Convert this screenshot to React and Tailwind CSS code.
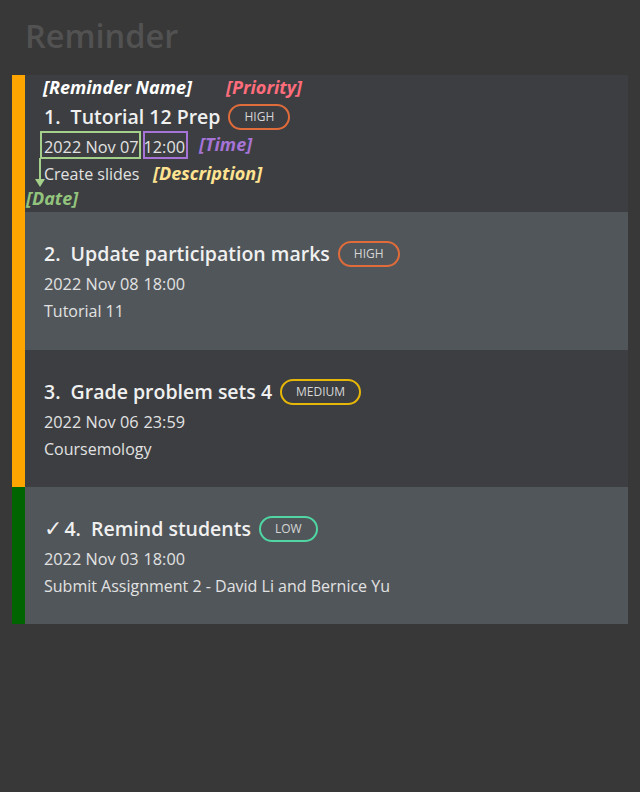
import React from 'react';

const reminders = [
  { no: 1, name: 'Tutorial 12 Prep', priority: 'HIGH', date: '2022 Nov 07', time: '12:00', desc: 'Create slides', done: false },
  { no: 2, name: 'Update participation marks', priority: 'HIGH', date: '2022 Nov 08', time: '18:00', desc: 'Tutorial 11', done: false },
  { no: 3, name: 'Grade problem sets 4', priority: 'MEDIUM', date: '2022 Nov 06', time: '23:59', desc: 'Coursemology', done: false },
  { no: 4, name: 'Remind students', priority: 'LOW', date: '2022 Nov 03', time: '18:00', desc: 'Submit Assignment 2 - David Li and Bernice Yu', done: true },
];

const badgeBorder = {
  HIGH: 'border-[#e06b3b]',
  MEDIUM: 'border-[#e6b608]',
  LOW: 'border-[#4fd6a3]',
};

const Badge = ({ level }) => (
  <span className={`ml-[8px] inline-flex items-center h-[26px] px-[14px] rounded-full border-2 text-[12px] leading-[16px] text-[#d6d6d6] ${badgeBorder[level]}`}>
    {level}
  </span>
);

// overlay labels drawn over the first card (screenshot annotations)
const Annotations = () => (
  <div className="pointer-events-none">
    <span className="absolute left-[18px] top-[0px] text-[18px] font-bold italic text-white leading-[24px]">[Reminder Name]</span>
    <span className="absolute left-[201px] top-[0px] text-[18px] font-bold italic text-[#ff6d7c] leading-[24px]">[Priority]</span>
    <div className="absolute left-[15px] top-[56px] w-[101px] h-[28px] border-2 border-[#a4d08c]" />
    <div className="absolute left-[118px] top-[56px] w-[45px] h-[28px] border-2 border-[#a673d6]" />
    <span className="absolute left-[174px] top-[57px] text-[18px] font-bold italic text-[#a673d6] leading-[24px]">[Time]</span>
    <span className="absolute left-[128px] top-[86px] text-[18px] font-bold italic text-[#ffe391] leading-[24px]">[Description]</span>
    <svg className="absolute left-[9px] top-[83px]" width="12" height="30" viewBox="0 0 12 30">
      <line x1="6" y1="0" x2="6" y2="22" stroke="#a4d08c" strokeWidth="2" />
      <polygon points="1,21 11,21 6,29" fill="#a4d08c" />
    </svg>
    <span className="absolute left-[1px] top-[111px] text-[18px] font-bold italic text-[#93c47d] leading-[24px]">[Date]</span>
  </div>
);

const Card = ({ r, idx }) => (
  <div className="flex h-[137.25px]">
    <div className={`w-[13px] shrink-0 ${r.done ? 'bg-[#006400]' : 'bg-[#ffa500]'}`} />
    <div className={`relative flex-1 pl-[19px] pt-[28px] ${idx % 2 === 0 ? 'bg-[#3c3e41]' : 'bg-[#51565a]'}`}>
      <div className="flex items-center h-[28px]">
        <span className="whitespace-pre text-[19.5px] font-semibold text-[#f0f0f0] leading-[28px]">
          {r.done && <span className="text-[22px] mr-[2px]" style={{ fontFamily: '"DejaVu Sans", sans-serif' }}>✓</span>}
          {`${r.no}.  ${r.name}`}
        </span>
        <Badge level={r.priority} />
      </div>
      <div className="mt-[4px] flex gap-[5px] text-[16.3px] leading-[24px] text-[#e2e2e2]">
        <span>{r.date}</span>
        <span>{r.time}</span>
      </div>
      <div className="mt-[3px] text-[16px] leading-[24px] text-[#e2e2e2]">{r.desc}</div>
      {idx === 0 && <Annotations />}
    </div>
  </div>
);

export default function App() {
  return (
    <div className="min-h-[792px] bg-[#383838]" style={{ fontFamily: '"Open Sans", "Noto Sans", sans-serif' }}>
      <div className="h-[75px] pl-[25px] pt-[14px]">
        <h1 className="text-[32.5px] font-semibold leading-[44px] text-[#525252]">Reminder</h1>
      </div>
      <div className="ml-[12px] w-[616px]">
        {reminders.map((r, i) => (
          <Card key={r.no} r={r} idx={i} />
        ))}
      </div>
    </div>
  );
}
